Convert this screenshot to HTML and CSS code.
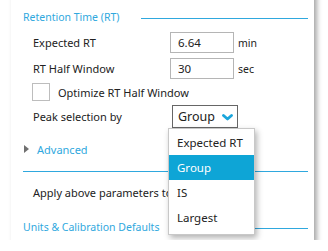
FILE: index.html
```html
<!DOCTYPE html>
<html lang="en">
<head>
    <meta charset="UTF-8">
    <title>Retention Time</title>
    <link rel="stylesheet" href="styles.css">
</head>
<body>
    <div class="panel">
        <div class="section-title">
            <span>Retention Time (RT)</span>
            <span class="rule"></span>
        </div>

        <div class="row row-input">
            <label class="label">Expected RT</label>
            <input class="field" type="text" value="6.64">
            <span class="unit">min</span>
        </div>
        <div class="row row-input">
            <label class="label">RT Half Window</label>
            <input class="field" type="text" value="30">
            <span class="unit">sec</span>
        </div>
        <div class="row row-check">
            <span class="checkbox"></span>
            <span>Optimize RT Half Window</span>
        </div>
        <div class="row row-select">
            <label class="label">Peak selection by</label>
            <div class="select-wrap">
                <div class="select">
                    <span>Group</span>
                    <svg class="chevron" width="11" height="7" viewBox="0 0 11 7">
                        <polyline points="1.5,1.5 5.5,5 9.5,1.5" fill="none" stroke="#1ba6dc" stroke-width="2.8" stroke-linecap="round" stroke-linejoin="round"/>
                    </svg>
                </div>
                <ul class="dropdown">
                    <li>Expected RT</li>
                    <li class="active">Group</li>
                    <li>IS</li>
                    <li>Largest</li>
                </ul>
            </div>
        </div>

        <div class="advanced">
            <span class="arrow"></span>
            <span>Advanced</span>
        </div>

        <div class="divider"></div>

        <div class="row row-apply">
            <label class="label">Apply above parameters to</label>
            <div class="select select-hidden"></div>
        </div>

        <div class="section-title section-units">
            <span>Units &amp; Calibration Defaults</span>
            <span class="rule"></span>
        </div>
    </div>
</body>
</html>
```

FILE: styles.css
```css
body {
    margin: 0;
    background-color: #fff;
    font-family: "Noto Sans", "Open Sans", sans-serif;
    font-size: 11px;
    color: #222;
}

.panel {
    margin: -10px 0 0 11px;
    width: 303px;
    height: 250px;
    box-sizing: border-box;
    padding: 18px 6px 0 12px;
    background-color: #fff;
    box-shadow: 3px 4px 5px rgba(0, 0, 0, 0.35);
}

.section-title {
    display: flex;
    align-items: center;
    height: 18px;
    color: #2fa8de;
    font-size: 10.5px;
    white-space: nowrap;
}

.rule {
    flex: 1;
    height: 1px;
    margin: 3px 0 0 22px;
    background-color: #2fa8de;
}

.row {
    display: flex;
    align-items: center;
    padding-left: 10px;
    white-space: nowrap;
}

.label {
    width: 137px;
}

.row-input {
    height: 21px;
    margin-top: 6px;
}

.row-input + .row-input {
    margin-top: 5px;
}

.field {
    box-sizing: border-box;
    width: 64px;
    height: 21px;
    margin: 0;
    padding: 0 7px;
    border: 1px solid #b5b5b5;
    font-family: inherit;
    font-size: 11.5px;
    color: #222;
}

.unit {
    margin-left: 4px;
    font-size: 10.5px;
}

.row-check {
    height: 18px;
    margin-top: 4px;
    padding-left: 9px;
}

.checkbox {
    box-sizing: border-box;
    width: 18px;
    height: 18px;
    margin-right: 8px;
    border: 1px solid #bdbdbd;
}

.row-select {
    height: 23px;
    margin-top: 4px;
}

.select-wrap {
    position: relative;
}

.select {
    box-sizing: border-box;
    display: flex;
    align-items: center;
    justify-content: space-between;
    width: 66px;
    height: 23px;
    margin-left: 2px;
    padding: 0 4px 0 5px;
    border: 1px solid #666;
    font-size: 12.5px;
}

.chevron {
    margin-top: 1px;
}

.dropdown {
    position: absolute;
    top: 23px;
    left: -2px;
    z-index: 10;
    width: 85px;
    margin: 0;
    padding: 1px 0 4px;
    list-style: none;
    background-color: #fff;
    border: 1px solid #c8c8c8;
    box-shadow: 2px 3px 6px rgba(0, 0, 0, 0.3);
    font-size: 11.5px;
}

.dropdown li {
    height: 25px;
    line-height: 25px;
    padding-left: 8px;
}

.dropdown li.active {
    background-color: #0ea5d6;
    color: #fff;
}

.advanced {
    display: flex;
    align-items: center;
    height: 18px;
    margin-top: 12px;
    color: #2fa8de;
}

.arrow {
    width: 0;
    height: 0;
    margin: 0 8px 0 1px;
    border-top: 4px solid transparent;
    border-bottom: 4px solid transparent;
    border-left: 5px solid #707070;
}

.divider {
    height: 1px;
    margin: 13px 0 0 0;
    background-color: #2fa8de;
}

.row-apply {
    height: 23px;
    margin-top: 9px;
}

.select-hidden {
    border-color: #999;
}

.section-units {
    margin-top: 14px;
}
```
